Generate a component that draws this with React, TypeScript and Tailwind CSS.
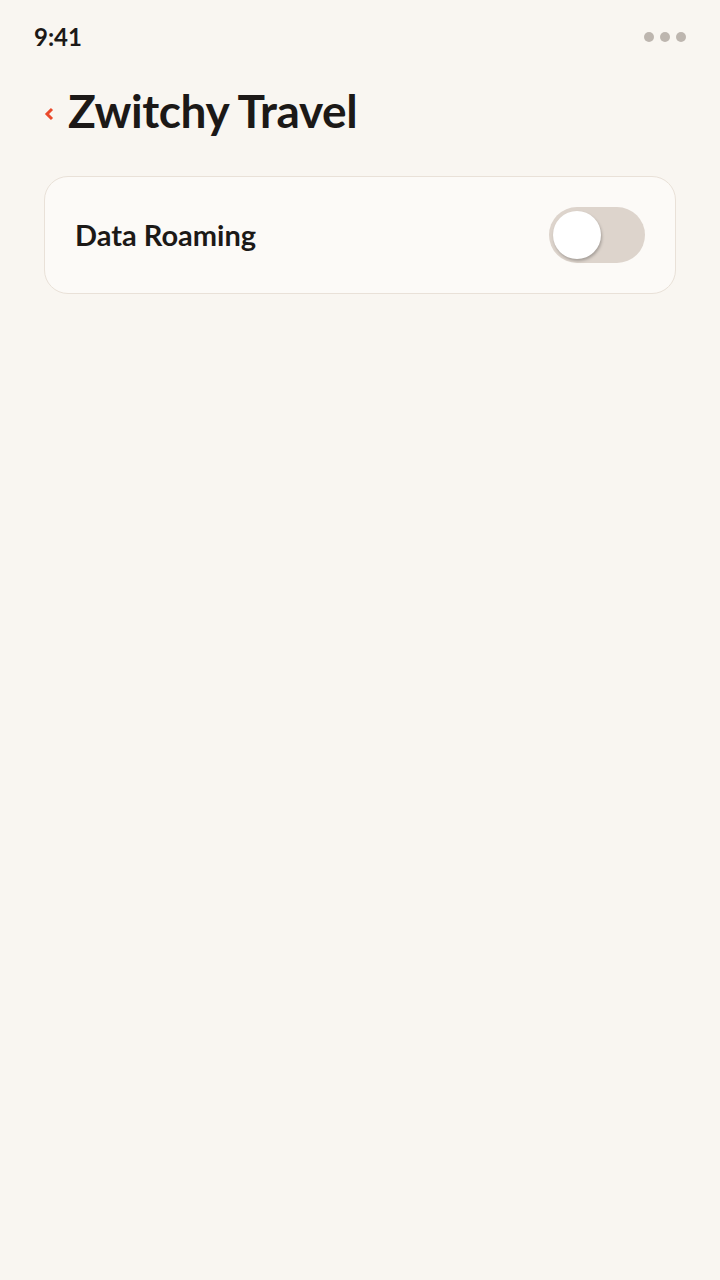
import { useState } from "react";

export default function App() {
  const [roaming, setRoaming] = useState(false);

  return (
    <div className="min-h-[1280px] w-full bg-[#f9f6f1] font-['Lato',_'Noto_Sans',_sans-serif] text-[#1c1917]">
      {/* Status bar */}
      <div className="flex items-center justify-between pl-[34px] pr-[34px] pt-[22px] h-[52px]">
        <span className="text-[24px] font-bold leading-none">9:41</span>
        <div className="flex items-center gap-[6px]">
          <span className="h-[10px] w-[10px] rounded-full bg-[#bdb6af]" />
          <span className="h-[10px] w-[10px] rounded-full bg-[#bdb6af]" />
          <span className="h-[10px] w-[10px] rounded-full bg-[#bdb6af]" />
        </div>
      </div>

      {/* Header */}
      <div className="flex items-center gap-[14px] pl-[44px] pt-[31px] h-[87px]">
        <svg width="10" height="14" viewBox="0 0 10 14" className="mt-[6px]">
          <path d="M8 2 L3 7 L8 12" fill="none" stroke="#ea4a2c" strokeWidth="3" strokeLinecap="butt" strokeLinejoin="miter" />
        </svg>
        <h1 className="text-[46px] font-bold leading-none tracking-[-0.4px]">Zwitchy Travel</h1>
      </div>

      {/* Settings card */}
      <div className="px-[44px] pt-[37px]">
        <div className="flex h-[118px] items-center justify-between rounded-[24px] border border-[#e9e1d8] bg-[#fcfaf7] pl-[30px] pr-[30px]">
          <span className="text-[29px] font-bold">Data Roaming</span>
          <button
            onClick={() => setRoaming(!roaming)}
            className={`relative h-[56px] w-[96px] rounded-full transition-colors ${roaming ? "bg-[#ea4a2c]" : "bg-[#ddd4cc]"}`}
          >
            <span
              className={`absolute top-[4px] h-[48px] w-[48px] rounded-full bg-white shadow-[1px_2px_3px_rgba(0,0,0,0.25)] transition-all ${roaming ? "left-[44px]" : "left-[4px]"}`}
            />
          </button>
        </div>
      </div>
    </div>
  );
}
